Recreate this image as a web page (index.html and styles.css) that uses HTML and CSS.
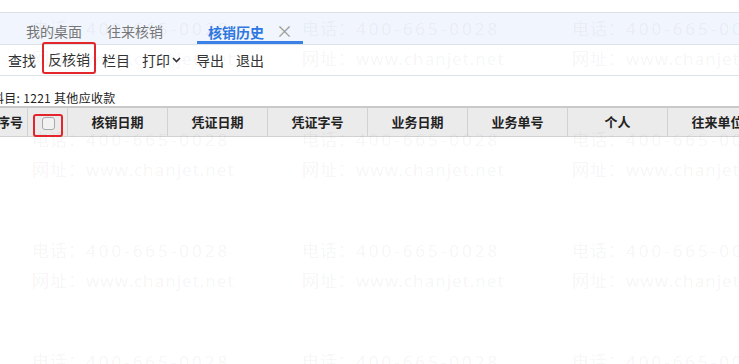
FILE: index.html
```html
<!DOCTYPE html>
<html lang="zh-CN">
<head>
    <meta charset="UTF-8">
    <meta name="viewport" content="width=device-width, initial-scale=1.0">
    <title>核销历史</title>
    <link rel="stylesheet" href="styles.css">
</head>
<body>
    <div class="page">
        <div class="top-gap"></div>

        <div class="tabbar">
            <div class="tab tab-first">我的桌面</div>
            <div class="tab tab-second">往来核销</div>
            <div class="tab tab-active">核销历史<span class="tab-close">×</span></div>
        </div>

        <div class="toolbar">
            <div class="tool">查找</div>
            <div class="tool tool-mark">反核销</div>
            <div class="tool">栏目</div>
            <div class="tool">打印<svg class="chevron" width="9" height="6" viewBox="0 0 9 6"><path d="M1 1 L4.5 4.5 L8 1" fill="none" stroke="#333" stroke-width="1.6"/></svg></div>
            <div class="tool">导出</div>
            <div class="tool">退出</div>
        </div>

        <div class="subject">科目: 1221 其他应收款</div>

        <div class="grid-head">
            <div class="cell cell-no">序号</div>
            <div class="cell cell-check"><div class="check-mark"><span class="checkbox"></span></div></div>
            <div class="cell">核销日期</div>
            <div class="cell">凭证日期</div>
            <div class="cell">凭证字号</div>
            <div class="cell">业务日期</div>
            <div class="cell">业务单号</div>
            <div class="cell">个人</div>
            <div class="cell">往来单位</div>
        </div>

        <!-- watermark layer -->
        <div class="watermark">
            <div class="wm"><p>电话：<span class="wm-num">400-665-0028</span></p><p>网址：www.chanjet.net</p></div>
            <div class="wm"><p>电话：<span class="wm-num">400-665-0028</span></p><p>网址：www.chanjet.net</p></div>
            <div class="wm"><p>电话：<span class="wm-num">400-665-0028</span></p><p>网址：www.chanjet.net</p></div>
            <div class="wm"><p>电话：<span class="wm-num">400-665-0028</span></p><p>网址：www.chanjet.net</p></div>
            <div class="wm"><p>电话：<span class="wm-num">400-665-0028</span></p><p>网址：www.chanjet.net</p></div>
            <div class="wm"><p>电话：<span class="wm-num">400-665-0028</span></p><p>网址：www.chanjet.net</p></div>
            <div class="wm"><p>电话：<span class="wm-num">400-665-0028</span></p><p>网址：www.chanjet.net</p></div>
            <div class="wm"><p>电话：<span class="wm-num">400-665-0028</span></p><p>网址：www.chanjet.net</p></div>
            <div class="wm"><p>电话：<span class="wm-num">400-665-0028</span></p><p>网址：www.chanjet.net</p></div>
            <div class="wm"><p>电话：<span class="wm-num">400-665-0028</span></p><p>网址：www.chanjet.net</p></div>
            <div class="wm"><p>电话：<span class="wm-num">400-665-0028</span></p><p>网址：www.chanjet.net</p></div>
            <div class="wm"><p>电话：<span class="wm-num">400-665-0028</span></p><p>网址：www.chanjet.net</p></div>
        </div>
    </div>
</body>
</html>
```
FILE: styles.css
```css
body {
    margin: 0;
    background-color: #fff;
    color: #333;
    font-family: "Noto Sans CJK SC", "Noto Sans", sans-serif;
}
.page {
    position: relative;
    width: 739px;
    height: 364px;
    overflow: hidden;
}
.top-gap {
    height: 12px;
}
.tabbar {
    display: flex;
    height: 31px;
    padding-left: 15px;
    background-color: #f1f5fd;
    border-top: 1px solid #dde1e8;
    border-bottom: 1px solid #dde1e8;
}
.tab {
    box-sizing: border-box;
    height: 31px;
    padding: 8px 11px 0;
    font-size: 14px;
    line-height: 20px;
    color: #777;
}
.tab-second {
    margin-left: 3px;
}
.tab-active {
    margin-left: 23px;
    padding-right: 10px;
    font-weight: bold;
    color: #2f78e0;
    border-bottom: 3px solid #3a80e6;
}
.tab-close {
    margin-left: 12px;
    font-weight: normal;
    font-size: 17px;
    color: #999;
}
.toolbar {
    display: flex;
    height: 30px;
    padding-left: 2px;
    border-bottom: 1px solid #dde1e8;
}
.tool {
    display: flex;
    align-items: center;
    padding: 0 6px;
    height: 30px;
    font-size: 14px;
    color: #333;
}
.tool-mark {
    box-sizing: border-box;
    height: 32px;
    margin-top: -3px;
    padding: 2px 4px 0;
    border: 2px solid #e3262b;
    border-radius: 3px;
}
.chevron {
    margin-left: 2px;
    margin-right: 3px;
}
.subject {
    height: 30px;
    margin-left: -8px;
    padding-top: 14px;
    box-sizing: border-box;
    font-size: 12px;
    line-height: 16px;
    letter-spacing: 0.3px;
    color: #222;
}
.grid-head {
    display: flex;
    margin-left: -7px;
    height: 28px;
    background-color: #ebebeb;
    border-top: 2px solid #c9c9c9;
    border-bottom: 1px solid #d2d2d2;
}
.cell {
    flex: 0 0 auto;
    box-sizing: border-box;
    width: 100px;
    height: 28px;
    line-height: 28px;
    text-align: center;
    font-size: 13px;
    font-weight: bold;
    color: #222;
    border-right: 1px solid #d2d2d2;
}
.cell-no {
    width: 35px;
}
.cell-check {
    width: 40px;
}
.check-mark {
    box-sizing: border-box;
    width: 30px;
    height: 23px;
    margin: 6px 0 0 5px;
    border: 2px solid #e3262b;
    border-radius: 3px;
    display: flex;
    align-items: center;
    justify-content: center;
}
.checkbox {
    display: block;
    box-sizing: border-box;
    width: 13px;
    height: 13px;
    margin-top: -4px;
    margin-left: 1px;
    background-color: #f2f2f2;
    border: 1px solid #a9a9a9;
    border-radius: 3px;
}
.watermark {
    position: absolute;
    left: 32px;
    top: 14px;
    display: grid;
    grid-template-columns: repeat(3, 270px);
    grid-auto-rows: 111px;
    pointer-events: none;
    font-family: "Noto Sans", "Noto Sans CJK SC", sans-serif;
    font-size: 17px;
    letter-spacing: 1px;
    color: rgba(0, 0, 0, 0.055);
    white-space: nowrap;
}
.wm p {
    margin: 0;
    line-height: 30px;
}
.wm-num {
    letter-spacing: 3px;
}
```
